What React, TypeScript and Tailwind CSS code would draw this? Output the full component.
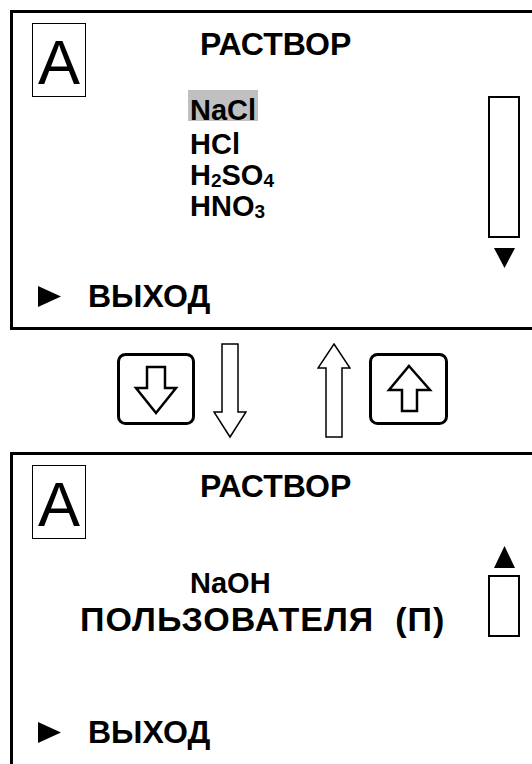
import React from "react";

const font = { fontFamily: '"Liberation Sans", Arial, sans-serif' };

function ABox() {
  return (
    <div className="ml-[19px] mt-[10px] flex h-[74px] w-[54px] shrink-0 items-start justify-center border border-black pt-[7px] text-[63px] font-normal leading-none">
      A
    </div>
  );
}

function RightTri() {
  return (
    <svg width="23" height="21" viewBox="0 0 23 21" className="shrink-0">
      <polygon points="0,0 23,10.5 0,21" fill="black" />
    </svg>
  );
}

function Exit({ className }: { className: string }) {
  return (
    <div className={"flex items-center " + className}>
      <div className="ml-[25px] flex items-center">
        <RightTri />
      </div>
      <div className="ml-[27px] text-[32px] font-bold leading-[28px]">ВЫХОД</div>
    </div>
  );
}

function Title() {
  return <div className="text-[32px] font-bold leading-[32px]">РАСТВОР</div>;
}

function DownButtonIcon() {
  return (
    <svg width="78" height="72" viewBox="0 0 78 72">
      <rect x="1.5" y="1.5" width="75" height="69" rx="7" fill="white" stroke="black" strokeWidth="3" />
      <polygon points="30,14 48,14 48,35 59,35 39,60 19,35 30,35" fill="white" stroke="black" strokeWidth="2.5" strokeLinejoin="miter" />
    </svg>
  );
}

function UpButtonIcon() {
  return (
    <svg width="79" height="72" viewBox="0 0 79 72">
      <rect x="1.5" y="1.5" width="76" height="69" rx="7" fill="white" stroke="black" strokeWidth="3" />
      <polygon points="40,13 61,37 48,37 48,58 33,58 33,37 20,37" fill="white" stroke="black" strokeWidth="2.5" strokeLinejoin="miter" />
    </svg>
  );
}

function LongDown() {
  return (
    <svg width="34" height="96" viewBox="0 0 34 96">
      <polygon points="9,1 25,1 25,69 33,69 17,94 1,69 9,69" fill="white" stroke="black" strokeWidth="1.5" />
    </svg>
  );
}

function LongUp() {
  return (
    <svg width="34" height="96" viewBox="0 0 34 96">
      <polygon points="17,1 33,25 25,25 25,94 9,94 9,25 1,25" fill="white" stroke="black" strokeWidth="1.5" />
    </svg>
  );
}

function Sub({ children }: { children: React.ReactNode }) {
  return <span className="align-[-2px] text-[19px]">{children}</span>;
}

export default function App() {
  return (
    <div className="min-h-[764px] w-[532px] overflow-hidden bg-white text-black" style={font}>
      {/* Top screen */}
      <div className="ml-[10px] mt-[10px] flex h-[320px] flex-col border-b-[3px] border-l-[3px] border-t-[3px] border-black">
        <div className="flex">
          <ABox />
          <div className="ml-[102px] flex flex-col">
            <div className="ml-[12px] mt-[15px]">
              <Title />
            </div>
            <div className="mt-[30px] flex flex-col text-[29px] font-bold leading-[32px]">
              <div className="flex h-[38px] items-start">
                <span className="inline-block h-[31px] bg-[#c0c0c0] px-[2px] pt-[5px] leading-[30px]">NaCl</span>
              </div>
              <div className="h-[31px] pl-[2px]">HCl</div>
              <div className="h-[31px] pl-[2px]">
                H<Sub>2</Sub>SO<Sub>4</Sub>
              </div>
              <div className="h-[31px] pl-[2px]">
                HNO<Sub>3</Sub>
              </div>
            </div>
          </div>
          <div className="ml-auto mr-[12px] mt-[83px] flex flex-col items-center">
            <div className="h-[142px] w-[32px] border-2 border-black" />
            <svg width="21" height="20" viewBox="0 0 21 20" className="mt-[10px]">
              <polygon points="0,0 21,0 10.5,20" fill="black" />
            </svg>
          </div>
        </div>
        <Exit className="mb-[17px] mt-auto" />
      </div>

      {/* Buttons between screens */}
      <div className="flex h-[122px] items-start">
        <div className="ml-[117px] mt-[23px]">
          <DownButtonIcon />
        </div>
        <div className="ml-[18px] mt-[13px]">
          <LongDown />
        </div>
        <div className="ml-[70px] mt-[13px]">
          <LongUp />
        </div>
        <div className="ml-[18px] mt-[23px]">
          <UpButtonIcon />
        </div>
      </div>

      {/* Bottom screen */}
      <div className="ml-[10px] flex h-[320px] flex-col border-l-[3px] border-t-[3px] border-black">
        <div className="flex">
          <ABox />
          <div className="ml-[114px] mt-[15px]">
            <Title />
          </div>
        </div>
        <div className="flex">
          <div className="flex flex-1 flex-col font-bold leading-[36px]">
            <div className="ml-[177px] mt-[26px] text-[29px]">NaOH</div>
            <div className="ml-[67px] whitespace-pre text-[34px] tracking-[1px]">ПОЛЬЗОВАТЕЛЯ  (П)</div>
          </div>
          <div className="mr-[12px] mt-[7px] flex flex-col items-center">
            <svg width="21" height="22" viewBox="0 0 21 22">
              <polygon points="10.5,0 21,22 0,22" fill="black" />
            </svg>
            <div className="mt-[7px] h-[62px] w-[32px] border-2 border-black" />
          </div>
        </div>
        <Exit className="mt-[81px]" />
      </div>
    </div>
  );
}
